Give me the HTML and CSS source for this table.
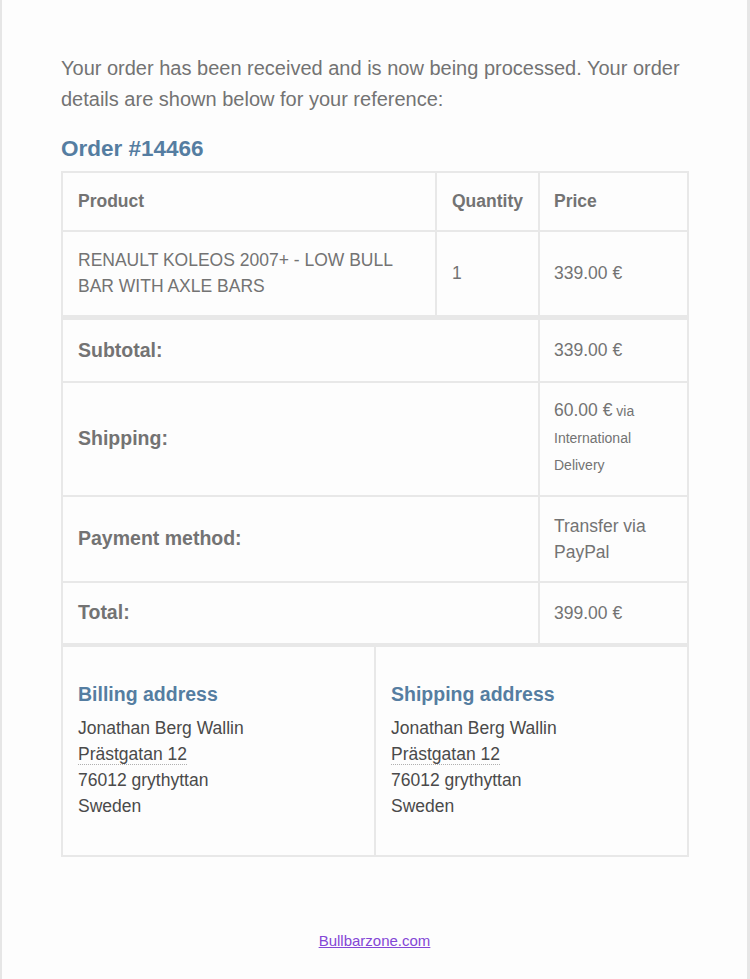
FILE: index.html
```html
<!DOCTYPE html>
<html>
<head>
<meta charset="utf-8">
<link rel="stylesheet" href="styles.css">
</head>
<body>
<div class="frame">
  <div class="content">
    <p class="intro">Your order has been received and is now being processed. Your order details are shown below for your reference:</p>
    <h2 class="order-title">Order #14466</h2>
    <table class="order">
      <thead>
        <tr>
          <th class="c-prod">Product</th>
          <th class="c-qty">Quantity</th>
          <th class="c-price">Price</th>
        </tr>
      </thead>
      <tbody>
        <tr>
          <td class="c-prod">RENAULT KOLEOS 2007+ - LOW BULL BAR WITH AXLE BARS</td>
          <td class="c-qty">1</td>
          <td class="c-price">339.00 €</td>
        </tr>
      </tbody>
      <tfoot>
        <tr class="first">
          <th colspan="2">Subtotal:</th>
          <td>339.00 €</td>
        </tr>
        <tr>
          <th colspan="2">Shipping:</th>
          <td class="ship"><span class="amount">60.00 €</span> via International Delivery</td>
        </tr>
        <tr>
          <th colspan="2">Payment method:</th>
          <td>Transfer via PayPal</td>
        </tr>
        <tr>
          <th colspan="2">Total:</th>
          <td>399.00 €</td>
        </tr>
      </tfoot>
    </table>
    <table class="addresses">
      <tr>
        <td>
          <h3>Billing address</h3>
          <p>Jonathan Berg Wallin<br><span class="addr">Prästgatan 12</span><br>76012 grythyttan<br>Sweden</p>
        </td>
        <td>
          <h3>Shipping address</h3>
          <p>Jonathan Berg Wallin<br><span class="addr">Prästgatan 12</span><br>76012 grythyttan<br>Sweden</p>
        </td>
      </tr>
    </table>
  </div>
  <div class="footer"><a href="#">Bullbarzone.com</a></div>
</div>
</body>
</html>
```

FILE: styles.css
```css
html, body {
  margin: 0;
  padding: 0;
  background: #fdfdfd;
}
body {
  font-family: "Liberation Sans", Arial, sans-serif;
  color: #737373;
}
.frame {
  min-height: 979px;
  box-sizing: border-box;
  border-left: 2px solid #e6e6e6;
  border-right: 3px solid #e6e6e6;
  width: 750px;
}
.content {
  padding: 53px 61px 0 59px;
}
.intro {
  margin: 0;
  font-size: 20px;
  line-height: 31px;
  color: #737373;
}
.order-title {
  margin: 19px 0 7px;
  font-size: 22.5px;
  line-height: 30px;
  font-weight: bold;
  color: #557da1;
}
table {
  border-collapse: collapse;
  width: 628px;
}
.order th, .order td {
  border: 2px solid #e8e8e8;
  padding: 15.5px 15px 16px;
  text-align: left;
  vertical-align: middle;
  color: #737373;
}
.order thead th {
  font-size: 17.5px;
  line-height: 25px;
}
.order tbody td {
  font-size: 17.5px;
  line-height: 26px;
}
.c-qty { width: 71px; }
.c-price { width: 118px; }
.order td.c-price, .order th.c-price, .order tfoot td {
  padding-left: 14px;
}
.order tfoot th {
  font-size: 19.5px;
  line-height: 29px;
}
.order tfoot td {
  font-size: 17.5px;
  line-height: 26px;
}
.order tfoot tr.first th, .order tfoot tr.first td {
  border-top-width: 5px;
}
.order tfoot td.ship {
  font-size: 14px;
  line-height: 27px;
}
.order tfoot td.ship .amount {
  font-size: 17.5px;
  line-height: 20px;
}
.addresses td {
  width: 50%;
  border: 2px solid #e8e8e8;
  padding: 34px 14px 36px 15px;
  vertical-align: top;
}
.addresses h3 {
  margin: 0 0 8px;
  font-size: 19.5px;
  line-height: 26px;
  color: #557da1;
}
.addresses p {
  margin: 0;
  font-size: 17.5px;
  line-height: 26px;
  color: #4a4a4a;
}
.addr {
  border-bottom: 1px dotted #b0b0b0;
}
.footer {
  text-align: center;
  padding-top: 75px;
  font-size: 15px;
}
.footer a {
  color: #8447d6;
}
```
